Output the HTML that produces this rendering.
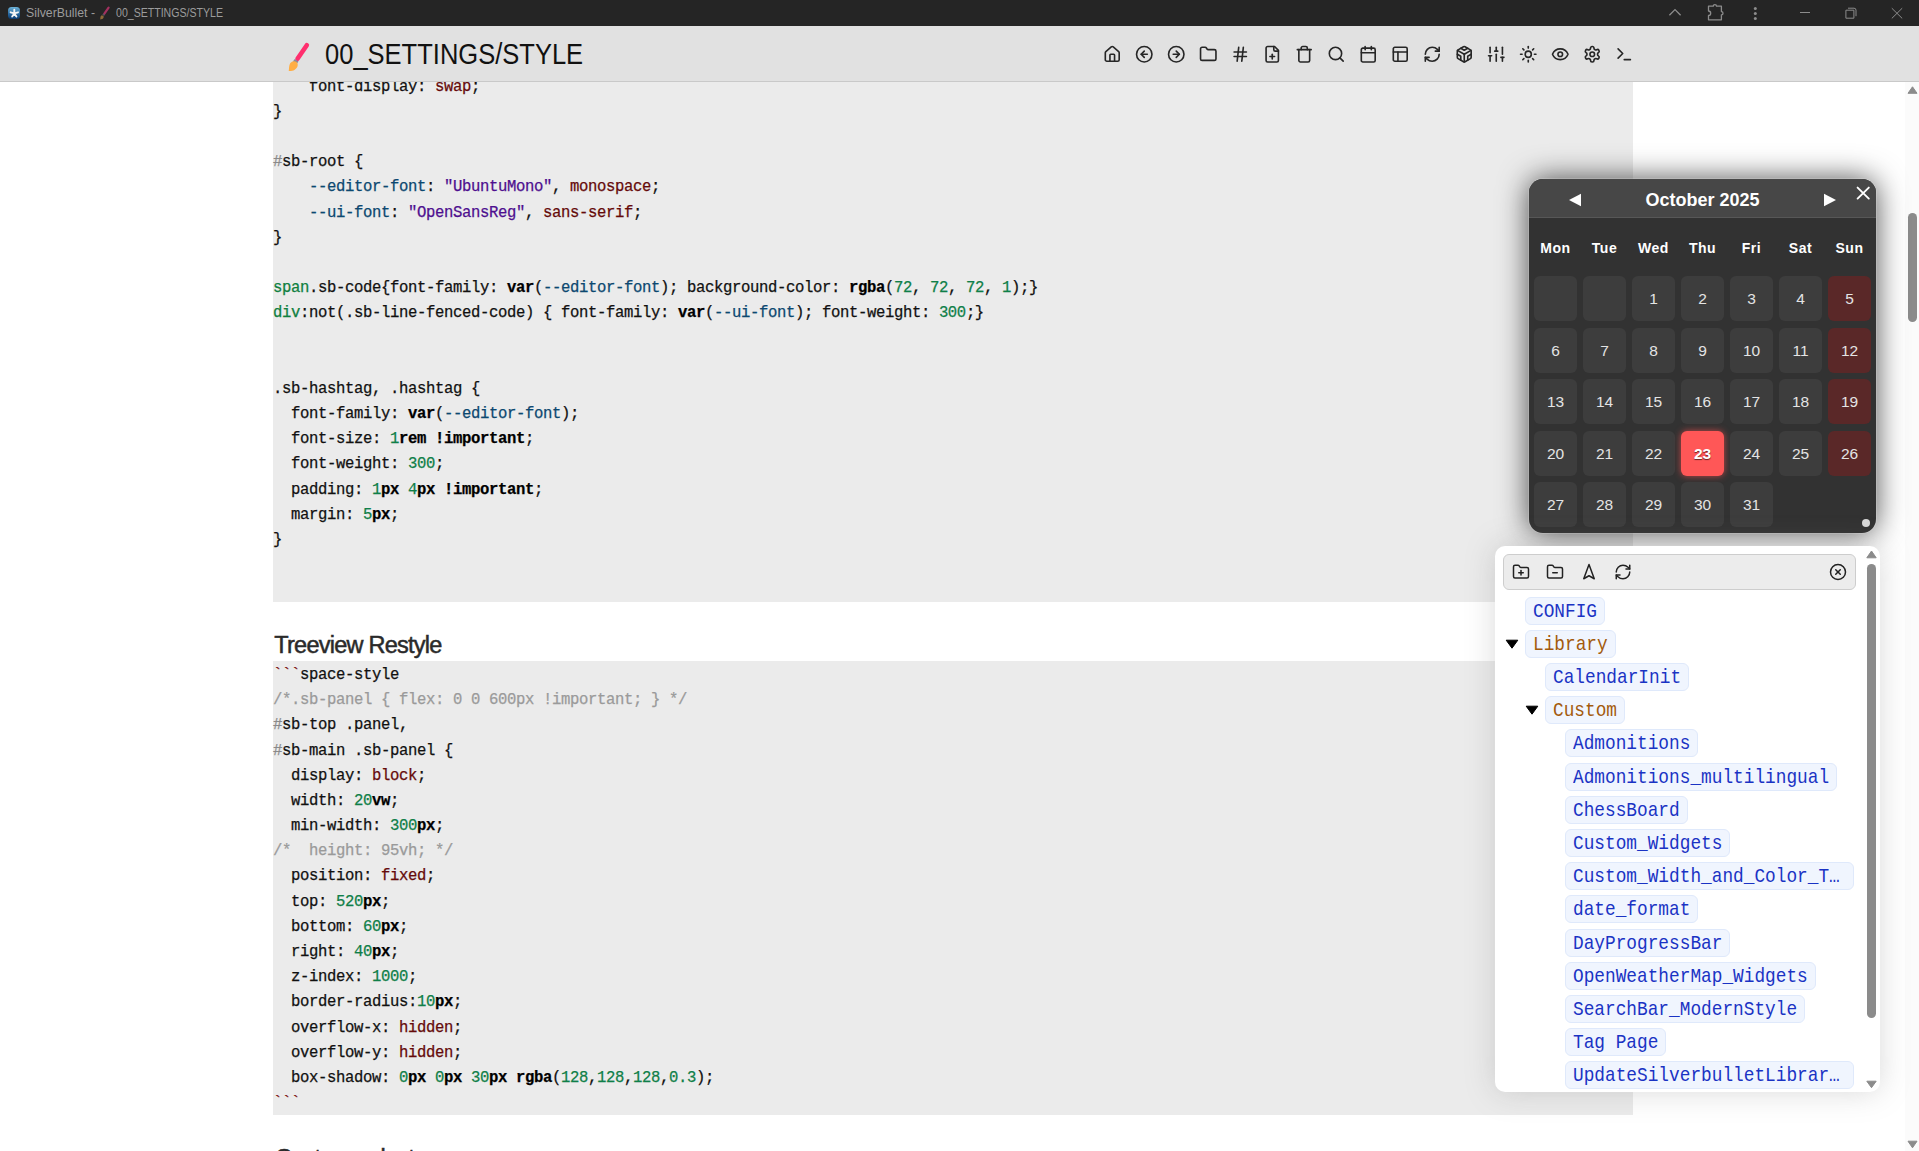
<!DOCTYPE html>
<html><head><meta charset="utf-8">
<style>
*{box-sizing:border-box}
html,body{margin:0;padding:0}
body{width:1919px;height:1151px;overflow:hidden;position:relative;background:#fff;font-family:"Liberation Sans",sans-serif}
.abs{position:absolute}
#titlebar{left:0;top:0;width:1919px;height:26px;background:#252525}
#topbar{left:0;top:26px;width:1919px;height:56px;background:#e1e1e1;border-bottom:1px solid #c9c9c9;z-index:5}
.cb{position:absolute;left:273px;width:1360px;background:#ebebeb}
.code{position:absolute;left:273px;font-family:"Liberation Mono",monospace;font-size:15.6px;letter-spacing:-0.36px;line-height:25.18px;white-space:pre;color:#111;-webkit-text-stroke:0.25px currentColor}
.code .m{color:#650a0a}
.code .s{color:#4e0f8f}
.code .v{color:#0c4870}
.code .n{color:#0f7f48}
.code .t{color:#0f8040}
.code .k{font-weight:bold;color:#000}
.code .c{color:#9a9a9a}
.code .h{color:#8a8a8a}
.code .q{color:#7a1010}
h2{margin:0;position:absolute;font-family:"Liberation Sans",sans-serif;font-weight:normal;font-size:23.5px;line-height:30px;color:#2a2a2a;letter-spacing:-0.75px;white-space:pre;-webkit-text-stroke:0.5px currentColor}
svg.i{position:absolute;fill:none;stroke:#262626;stroke-width:2.1;stroke-linecap:round;stroke-linejoin:round}

.dh{font-size:14px;font-weight:bold;color:#fff;text-align:center;line-height:16px;letter-spacing:0.5px}
.dc{width:43px;height:45px;border-radius:6px;background:#3d3d3d;color:#e4e4e4;font-size:15.5px;line-height:46.5px;text-align:center}
.dc.sun{background:#5a2828}
.dc.today{background:#ff5757;font-weight:bold;color:#fff;box-shadow:0 0 7px rgba(255,80,80,0.7);text-shadow:0 1px 1px rgba(0,0,0,0.6)}
.pill{height:28px;padding:0 7px;border:1px solid #dfe9fb;background:#f0f5fe;border-radius:6px;font-family:"Liberation Mono",monospace;font-size:17.8px;line-height:26px;white-space:pre}
.pill span{display:inline-block;transform:scaleY(1.15)}
.pill.pg{color:#1a33c4}
.pill.fd{color:#a35a0c}
svg.ti{stroke:#222;stroke-width:2}
#vscroll{left:1905px;top:82px;width:14px;height:1069px;background:#fbfbfb}
</style></head><body>
<div id="titlebar" class="abs">
<div class="abs" style="left:7.8px;top:6.6px;width:12.6px;height:12.7px;border-radius:3.5px;background:linear-gradient(#6db2d6,#2a6aa0 55%,#0b3a70)"></div>
<svg class="abs" style="left:7.8px;top:6.6px" width="13" height="13" viewBox="0 0 13 13"><g stroke="#f4f4f4" stroke-width="1.9" stroke-linecap="round"><path d="M6.3 6.4V2.7M6.3 6.4L2.6 5.3M6.3 6.4L10 5.3M6.3 6.4L4.2 9.6M6.3 6.4L8.4 9.6"/></g></svg>
<div class="abs" style="left:26px;top:5px;font-size:12.3px;line-height:16px;color:#9c9c9c;white-space:pre">SilverBullet -</div>
<svg class="abs" style="left:98px;top:4px" width="14" height="18" viewBox="98 4 14 18"><path d="M108.6 7.6L104.2 13.9" stroke="#a3305f" stroke-width="2.2" stroke-linecap="round"/><path d="M104 14.2L103.2 15.3" stroke="#5a5560" stroke-width="2.2"/><path d="M101.2 15.6c1-.5 2.3 0 2.5 1c.2 1.1-.6 2.2-1.6 2.5c-.6.2-1.3.3-1.9.3c.1-.6.1-1.3.2-2c.2-.9.4-1.5.8-1.8z" fill="#8e6a36"/></svg>
<div class="abs" style="left:115.5px;top:5px;font-size:12.3px;line-height:16px;color:#9c9c9c;white-space:pre;transform:scaleX(0.86);transform-origin:0 0">00_SETTINGS/STYLE</div>
<svg class="abs" style="left:1660px;top:0" width="260" height="26" viewBox="1660 0 260 26" fill="none" stroke="#8c8c8c" stroke-width="1.3">
<path d="M1669.4 15.3L1675 9.6L1680.6 15.3"/>
<path d="M1708.5 6.2h4.8a1.6 1.6 0 0 1 3.2 0h4.9v5.4a1.6 1.6 0 0 1 0 3.2v5.0h-12.9v-4.4a2.2 2.2 0 0 0 0-4.4z" stroke-linejoin="round"/>
<g fill="#8c8c8c" stroke="none"><circle cx="1755.3" cy="8.4" r="1.5"/><circle cx="1755.3" cy="13.4" r="1.5"/><circle cx="1755.3" cy="18.4" r="1.5"/></g>
<path d="M1800 12.5h10" stroke-width="1"/>
<path d="M1845.9 10.2h8v8h-8z M1848 8.2h6a2 2 0 0 1 2 2v6" stroke-width="1"/>
<path d="M1891.8 8.2l10.4 10.2M1902.2 8.2l-10.4 10.2" stroke-width="1"/>
</svg>
</div>
<div id="topbar" class="abs">
<svg class="abs" style="left:280px;top:10px" width="40" height="40" viewBox="280 36 40 40">
<path d="M306.8 45.2L297.5 58.8" stroke="#ff2f6e" stroke-width="4.6" stroke-linecap="round"/>
<path d="M296.6 60.2L294.8 62.8" stroke="#8f8a98" stroke-width="4.6"/>
<path d="M292.5 61.5c2.2-1 4.8 0.2 5.2 2.6c0.4 2.5-1.5 5.5-4.2 6.3c-1.6 0.5-3.5 0.6-4.8 0.6c0.4-1.5 0.2-3.3 0.6-5.2c0.5-2.2 1.4-3.6 3.2-4.3z" fill="#ffae45"/>
</svg>
<div class="abs" style="left:325px;top:8px;font-size:29px;line-height:40px;color:#111;white-space:pre;transform:scaleX(0.88);transform-origin:0 0">00_SETTINGS/STYLE</div>
<svg class="i" style="left:1102.75px;top:18.75px" width="18.5" height="18.5" viewBox="0 0 24 24"><path d="M15 21v-8a1 1 0 0 0-1-1h-4a1 1 0 0 0-1 1v8"/><path d="M3 10a2 2 0 0 1 .709-1.528l7-5.999a2 2 0 0 1 2.582 0l7 5.999A2 2 0 0 1 21 10v9a2 2 0 0 1-2 2H5a2 2 0 0 1-2-2z"/></svg>
<svg class="i" style="left:1134.75px;top:18.75px" width="18.5" height="18.5" viewBox="0 0 24 24"><circle cx="12" cy="12" r="10"/><path d="M16 12H8"/><path d="m12 8-4 4 4 4"/></svg>
<svg class="i" style="left:1166.75px;top:18.75px" width="18.5" height="18.5" viewBox="0 0 24 24"><circle cx="12" cy="12" r="10"/><path d="M8 12h8"/><path d="m12 16 4-4-4-4"/></svg>
<svg class="i" style="left:1198.75px;top:18.75px" width="18.5" height="18.5" viewBox="0 0 24 24"><path d="M20 20a2 2 0 0 0 2-2V8a2 2 0 0 0-2-2h-7.9a2 2 0 0 1-1.69-.9L9.6 3.9A2 2 0 0 0 7.93 3H4a2 2 0 0 0-2 2v13a2 2 0 0 0 2 2Z"/></svg>
<svg class="i" style="left:1230.75px;top:18.75px" width="18.5" height="18.5" viewBox="0 0 24 24"><line x1="4" x2="20" y1="9" y2="9"/><line x1="4" x2="20" y1="15" y2="15"/><line x1="10" x2="8" y1="3" y2="21"/><line x1="16" x2="14" y1="3" y2="21"/></svg>
<svg class="i" style="left:1262.75px;top:18.75px" width="18.5" height="18.5" viewBox="0 0 24 24"><path d="M15 2H6a2 2 0 0 0-2 2v16a2 2 0 0 0 2 2h12a2 2 0 0 0 2-2V7Z"/><path d="M14 2v4a2 2 0 0 0 2 2h4"/><path d="M9 15h6"/><path d="M12 18v-6"/></svg>
<svg class="i" style="left:1294.75px;top:18.75px" width="18.5" height="18.5" viewBox="0 0 24 24"><path d="M3 6h18"/><path d="M19 6v14c0 1-1 2-2 2H7c-1 0-2-1-2-2V6"/><path d="M8 6V4c0-1 1-2 2-2h4c1 0 2 1 2 2v2"/></svg>
<svg class="i" style="left:1326.75px;top:18.75px" width="18.5" height="18.5" viewBox="0 0 24 24"><circle cx="11" cy="11" r="8"/><path d="m21 21-4.3-4.3"/></svg>
<svg class="i" style="left:1358.75px;top:18.75px" width="18.5" height="18.5" viewBox="0 0 24 24"><path d="M8 2v4"/><path d="M16 2v4"/><rect width="18" height="18" x="3" y="4" rx="2"/><path d="M3 10h18"/></svg>
<svg class="i" style="left:1390.75px;top:18.75px" width="18.5" height="18.5" viewBox="0 0 24 24"><rect width="18" height="18" x="3" y="3" rx="2"/><path d="M3 9h18"/><path d="M9 21V9"/></svg>
<svg class="i" style="left:1422.75px;top:18.75px" width="18.5" height="18.5" viewBox="0 0 24 24"><path d="M3 12a9 9 0 0 1 9-9 9.75 9.75 0 0 1 6.74 2.74L21 8"/><path d="M21 3v5h-5"/><path d="M21 12a9 9 0 0 1-9 9 9.75 9.75 0 0 1-6.74-2.74L3 16"/><path d="M8 16H3v5"/></svg>
<svg class="i" style="left:1454.75px;top:18.75px" width="18.5" height="18.5" viewBox="0 0 24 24"><path d="M21 16V8a2 2 0 0 0-1-1.73l-7-4a2 2 0 0 0-2 0l-7 4A2 2 0 0 0 3 8v8a2 2 0 0 0 1 1.73l7 4a2 2 0 0 0 2 0l7-4A2 2 0 0 0 21 16z"/><polyline points="7.5 4.21 12 6.81 16.5 4.21"/><polyline points="7.5 19.79 7.5 14.6 3 12"/><polyline points="21 12 16.5 14.6 16.5 19.79"/><polyline points="3.27 6.96 12 12.01 20.73 6.96"/><line x1="12" x2="12" y1="22.08" y2="12"/></svg>
<svg class="i" style="left:1486.75px;top:18.75px" width="18.5" height="18.5" viewBox="0 0 24 24"><line x1="4" x2="4" y1="21" y2="14"/><line x1="4" x2="4" y1="10" y2="3"/><line x1="12" x2="12" y1="21" y2="12"/><line x1="12" x2="12" y1="8" y2="3"/><line x1="20" x2="20" y1="21" y2="16"/><line x1="20" x2="20" y1="12" y2="3"/><line x1="2" x2="6" y1="14" y2="14"/><line x1="10" x2="14" y1="8" y2="8"/><line x1="18" x2="22" y1="16" y2="16"/></svg>
<svg class="i" style="left:1518.75px;top:18.75px" width="18.5" height="18.5" viewBox="0 0 24 24"><circle cx="12" cy="12" r="4"/><path d="M12 2v2"/><path d="M12 20v2"/><path d="m4.93 4.93 1.41 1.41"/><path d="m17.66 17.66 1.41 1.41"/><path d="M2 12h2"/><path d="M20 12h2"/><path d="m6.34 17.66-1.41 1.41"/><path d="m19.07 4.93-1.41 1.41"/></svg>
<svg class="i" style="left:1550.75px;top:18.75px" width="18.5" height="18.5" viewBox="0 0 24 24"><path d="M2.062 12.348a1 1 0 0 1 0-.696 10.75 10.75 0 0 1 19.876 0 1 1 0 0 1 0 .696 10.75 10.75 0 0 1-19.876 0"/><circle cx="12" cy="12" r="3"/></svg>
<svg class="i" style="left:1582.75px;top:18.75px" width="18.5" height="18.5" viewBox="0 0 24 24"><path d="M12.22 2h-.44a2 2 0 0 0-2 2v.18a2 2 0 0 1-1 1.73l-.43.25a2 2 0 0 1-2 0l-.15-.08a2 2 0 0 0-2.73.73l-.22.38a2 2 0 0 0 .73 2.73l.15.1a2 2 0 0 1 1 1.72v.51a2 2 0 0 1-1 1.74l-.15.09a2 2 0 0 0-.73 2.73l.22.38a2 2 0 0 0 2.73.73l.15-.08a2 2 0 0 1 2 0l.43.25a2 2 0 0 1 1 1.73V20a2 2 0 0 0 2 2h.44a2 2 0 0 0 2-2v-.18a2 2 0 0 1 1-1.73l.43-.25a2 2 0 0 1 2 0l.15.08a2 2 0 0 0 2.73-.73l.22-.39a2 2 0 0 0-.73-2.73l-.15-.08a2 2 0 0 1-1-1.74v-.5a2 2 0 0 1 1-1.74l.15-.09a2 2 0 0 0 .73-2.73l-.22-.38a2 2 0 0 0-2.73-.73l-.15.08a2 2 0 0 1-2 0l-.43-.25a2 2 0 0 1-1-1.73V4a2 2 0 0 0-2-2z"/><circle cx="12" cy="12" r="3"/></svg>
<svg class="i" style="left:1614.75px;top:18.75px" width="18.5" height="18.5" viewBox="0 0 24 24"><polyline points="4 17 10 11 4 5"/><line x1="12" x2="20" y1="19" y2="19"/></svg>
</div>

<div class="cb" style="top:26px;height:576px"></div>
<div class="code" style="top:49.4px">
    font-display: <span class="m">swap</span>;
}

<span class="h">#</span>sb-root {
    <span class="v">--editor-font</span>: <span class="s">"UbuntuMono"</span>, <span class="m">monospace</span>;
    <span class="v">--ui-font</span>: <span class="s">"OpenSansReg"</span>, <span class="m">sans-serif</span>;
}

<span class="t">span</span>.sb-code{font-family: <span class="k">var</span>(<span class="v">--editor-font</span>); background-color: <span class="k">rgba</span>(<span class="n">72</span>, <span class="n">72</span>, <span class="n">72</span>, <span class="n">1</span>);}
<span class="t">div</span>:not(.sb-line-fenced-code) { font-family: <span class="k">var</span>(<span class="v">--ui-font</span>); font-weight: <span class="n">300</span>;}


.sb-hashtag, .hashtag {
  font-family: <span class="k">var</span>(<span class="v">--editor-font</span>);
  font-size: <span class="n">1</span><span class="k">rem !important</span>;
  font-weight: <span class="n">300</span>;
  padding: <span class="n">1</span><span class="k">px</span> <span class="n">4</span><span class="k">px !important</span>;
  margin: <span class="n">5</span><span class="k">px</span>;
}
</div>

<h2 style="left:274.3px;top:629.8px">Treeview Restyle</h2>

<div class="cb" style="top:661px;height:454px"></div>
<div class="code" style="top:637.8px">
<span class="q">```</span>space-style
<span class="c">/*.sb-panel { flex: 0 0 600px !important; } */</span>
<span class="h">#</span>sb-top .panel,
<span class="h">#</span>sb-main .sb-panel {
  display: <span class="m">block</span>;
  width: <span class="n">20</span><span class="k">vw</span>;
  min-width: <span class="n">300</span><span class="k">px</span>;
<span class="c">/*  height: 95vh; */</span>
  position: <span class="m">fixed</span>;
  top: <span class="n">520</span><span class="k">px</span>;
  bottom: <span class="n">60</span><span class="k">px</span>;
  right: <span class="n">40</span><span class="k">px</span>;
  z-index: <span class="n">1000</span>;
  border-radius:<span class="n">10</span><span class="k">px</span>;
  overflow-x: <span class="m">hidden</span>;
  overflow-y: <span class="m">hidden</span>;
  box-shadow: <span class="n">0</span><span class="k">px</span> <span class="n">0</span><span class="k">px</span> <span class="n">30</span><span class="k">px</span> <span class="k">rgba</span>(<span class="n">128</span>,<span class="n">128</span>,<span class="n">128</span>,<span class="n">0.3</span>);
<span class="q">```</span>
</div>

<h2 style="left:275px;top:1143.4px">Custom select</h2>

<div id="vscroll" class="abs"></div><svg class="abs" style="left:1905px;top:82px" width="14" height="1069" viewBox="1905 82 14 1069"><path d="M1912.5 86.8L1917 93.3H1908z" fill="#8b8b8b" stroke="#8b8b8b" stroke-width="1" stroke-linejoin="round"/><path d="M1912.5 1147.8L1917 1141.2H1908z" fill="#8b8b8b" stroke="#8b8b8b" stroke-width="1" stroke-linejoin="round"/><rect x="1908" y="213" width="9" height="109" rx="4.5" fill="#8b8b8b"/></svg>
<div id="cal" class="abs" style="left:1529px;top:179px;width:347px;height:354px;border-radius:14px;background:#323232;box-shadow:0 0 0 1px rgba(255,255,255,0.18),0 0 30px rgba(0,0,0,0.7);overflow:hidden;z-index:10">
<div class="abs" style="left:0;top:0;width:347px;height:39px;background:#474747;border-bottom:1px solid #575757"></div>
<svg class="abs" style="left:0;top:0" width="347" height="40" viewBox="1529 179 347 40"><path d="M1569 200L1581 193.7V206.3z" fill="#fff"/><path d="M1836 200L1824 193.7V206.3z" fill="#fff"/><path d="M1857.6 187.6L1868.8 198.6M1868.8 187.6L1857.6 198.6" stroke="#fff" stroke-width="1.9" stroke-linecap="round"/></svg>
<div class="abs" style="left:0;top:188px;width:347px;text-align:center;font-size:18px;font-weight:bold;line-height:22px;color:#fff;top:10px">October 2025</div>
<div class="abs dh" style="left:1.5px;top:61px;width:50px">Mon</div>
<div class="abs dh" style="left:50.5px;top:61px;width:50px">Tue</div>
<div class="abs dh" style="left:99.5px;top:61px;width:50px">Wed</div>
<div class="abs dh" style="left:148.5px;top:61px;width:50px">Thu</div>
<div class="abs dh" style="left:197.5px;top:61px;width:50px">Fri</div>
<div class="abs dh" style="left:246.5px;top:61px;width:50px">Sat</div>
<div class="abs dh" style="left:295.5px;top:61px;width:50px">Sun</div>
<div class="abs dc" style="left:5px;top:97.0px"></div>
<div class="abs dc" style="left:54px;top:97.0px"></div>
<div class="abs dc" style="left:103px;top:97.0px">1</div>
<div class="abs dc" style="left:152px;top:97.0px">2</div>
<div class="abs dc" style="left:201px;top:97.0px">3</div>
<div class="abs dc" style="left:250px;top:97.0px">4</div>
<div class="abs dc sun" style="left:299px;top:97.0px">5</div>
<div class="abs dc" style="left:5px;top:148.5px">6</div>
<div class="abs dc" style="left:54px;top:148.5px">7</div>
<div class="abs dc" style="left:103px;top:148.5px">8</div>
<div class="abs dc" style="left:152px;top:148.5px">9</div>
<div class="abs dc" style="left:201px;top:148.5px">10</div>
<div class="abs dc" style="left:250px;top:148.5px">11</div>
<div class="abs dc sun" style="left:299px;top:148.5px">12</div>
<div class="abs dc" style="left:5px;top:200.0px">13</div>
<div class="abs dc" style="left:54px;top:200.0px">14</div>
<div class="abs dc" style="left:103px;top:200.0px">15</div>
<div class="abs dc" style="left:152px;top:200.0px">16</div>
<div class="abs dc" style="left:201px;top:200.0px">17</div>
<div class="abs dc" style="left:250px;top:200.0px">18</div>
<div class="abs dc sun" style="left:299px;top:200.0px">19</div>
<div class="abs dc" style="left:5px;top:251.5px">20</div>
<div class="abs dc" style="left:54px;top:251.5px">21</div>
<div class="abs dc" style="left:103px;top:251.5px">22</div>
<div class="abs dc today" style="left:152px;top:251.5px">23</div>
<div class="abs dc" style="left:201px;top:251.5px">24</div>
<div class="abs dc" style="left:250px;top:251.5px">25</div>
<div class="abs dc sun" style="left:299px;top:251.5px">26</div>
<div class="abs dc" style="left:5px;top:303.0px">27</div>
<div class="abs dc" style="left:54px;top:303.0px">28</div>
<div class="abs dc" style="left:103px;top:303.0px">29</div>
<div class="abs dc" style="left:152px;top:303.0px">30</div>
<div class="abs dc" style="left:201px;top:303.0px">31</div>
<div class="abs" style="left:333px;top:340px;width:8px;height:8px;border-radius:50%;background:#d8d8d8"></div>
</div>
<div id="tree" class="abs" style="left:1495px;top:546px;width:385px;height:546px;border-radius:10px;background:#fff;box-shadow:0 0 30px rgba(128,128,128,0.3);overflow:hidden;z-index:10">
<div class="abs" style="left:8.3px;top:8.3px;width:352.3px;height:36.2px;background:#ececec;border:1px solid #cdcdcd;border-radius:6px"></div>
<svg class="i ti" style="left:17.00px;top:17.2px" width="18" height="18" viewBox="0 0 24 24"><path d="M12 10v6"/><path d="M9 13h6"/><path d="M20 20a2 2 0 0 0 2-2V8a2 2 0 0 0-2-2h-7.9a2 2 0 0 1-1.69-.9L9.6 3.9A2 2 0 0 0 7.93 3H4a2 2 0 0 0-2 2v13a2 2 0 0 0 2 2Z"/></svg>
<svg class="i ti" style="left:51.00px;top:17.2px" width="18" height="18" viewBox="0 0 24 24"><path d="M9 13h6"/><path d="M20 20a2 2 0 0 0 2-2V8a2 2 0 0 0-2-2h-7.9a2 2 0 0 1-1.69-.9L9.6 3.9A2 2 0 0 0 7.93 3H4a2 2 0 0 0-2 2v13a2 2 0 0 0 2 2Z"/></svg>
<svg class="i ti" style="left:85.00px;top:17.2px" width="18" height="18" viewBox="0 0 24 24"><polygon points="12 2 19 21 12 17 5 21 12 2"/></svg>
<svg class="i ti" style="left:119.00px;top:17.2px" width="18" height="18" viewBox="0 0 24 24"><path d="M3 12a9 9 0 0 1 9-9 9.75 9.75 0 0 1 6.74 2.74L21 8"/><path d="M21 3v5h-5"/><path d="M21 12a9 9 0 0 1-9 9 9.75 9.75 0 0 1-6.74-2.74L3 16"/><path d="M8 16H3v5"/></svg>
<svg class="i ti" style="left:334.00px;top:17.2px" width="18" height="18" viewBox="0 0 24 24"><circle cx="12" cy="12" r="10"/><path d="m15 9-6 6"/><path d="m9 9 6 6"/></svg>
<svg class="abs" style="left:0;top:0" width="384" height="545" viewBox="1495 546 384 545"><path d="M1871.5 551L1876.2 557.8H1866.8z" fill="#8b8b8b" stroke="#8b8b8b" stroke-width="1" stroke-linejoin="round"/><path d="M1871.5 1087.7L1876.2 1081.2H1866.8z" fill="#8b8b8b" stroke="#8b8b8b" stroke-width="1" stroke-linejoin="round"/><rect x="1867" y="564" width="9" height="454" rx="4.5" fill="#8b8b8b"/></svg>
<div class="abs pill pg" style="left:30px;top:50.5px"><span>CONFIG</span></div>
<svg class="abs" style="left:10px;top:92.71000000000004px" width="14" height="10" viewBox="0 0 14 10"><path d="M1.2 1.2H12.8L7 9.2z" fill="#000" stroke="#000" stroke-width="1" stroke-linejoin="round"/></svg>
<div class="abs pill fd" style="left:30px;top:83.71000000000004px"><span>Library</span></div>
<div class="abs pill pg" style="left:50px;top:116.91999999999996px"><span>CalendarInit</span></div>
<svg class="abs" style="left:30px;top:159.13px" width="14" height="10" viewBox="0 0 14 10"><path d="M1.2 1.2H12.8L7 9.2z" fill="#000" stroke="#000" stroke-width="1" stroke-linejoin="round"/></svg>
<div class="abs pill fd" style="left:50px;top:150.13px"><span>Custom</span></div>
<div class="abs pill pg" style="left:70px;top:183.34000000000003px"><span>Admonitions</span></div>
<div class="abs pill pg" style="left:70px;top:216.54999999999995px"><span>Admonitions_multilingual</span></div>
<div class="abs pill pg" style="left:70px;top:249.76px"><span>ChessBoard</span></div>
<div class="abs pill pg" style="left:70px;top:282.97px"><span>Custom_Widgets</span></div>
<div class="abs pill pg" style="left:70px;top:316.18000000000006px;width:288.6px"><span>Custom_Width_and_Color_T…</span></div>
<div class="abs pill pg" style="left:70px;top:349.39px"><span>date_format</span></div>
<div class="abs pill pg" style="left:70px;top:382.6px"><span>DayProgressBar</span></div>
<div class="abs pill pg" style="left:70px;top:415.80999999999995px"><span>OpenWeatherMap_Widgets</span></div>
<div class="abs pill pg" style="left:70px;top:449.02px"><span>SearchBar_ModernStyle</span></div>
<div class="abs pill pg" style="left:70px;top:482.23px"><span>Tag Page</span></div>
<div class="abs pill pg" style="left:70px;top:515.44px;width:288.6px"><span>UpdateSilverbulletLibrar…</span></div>
</div>
</body></html>
